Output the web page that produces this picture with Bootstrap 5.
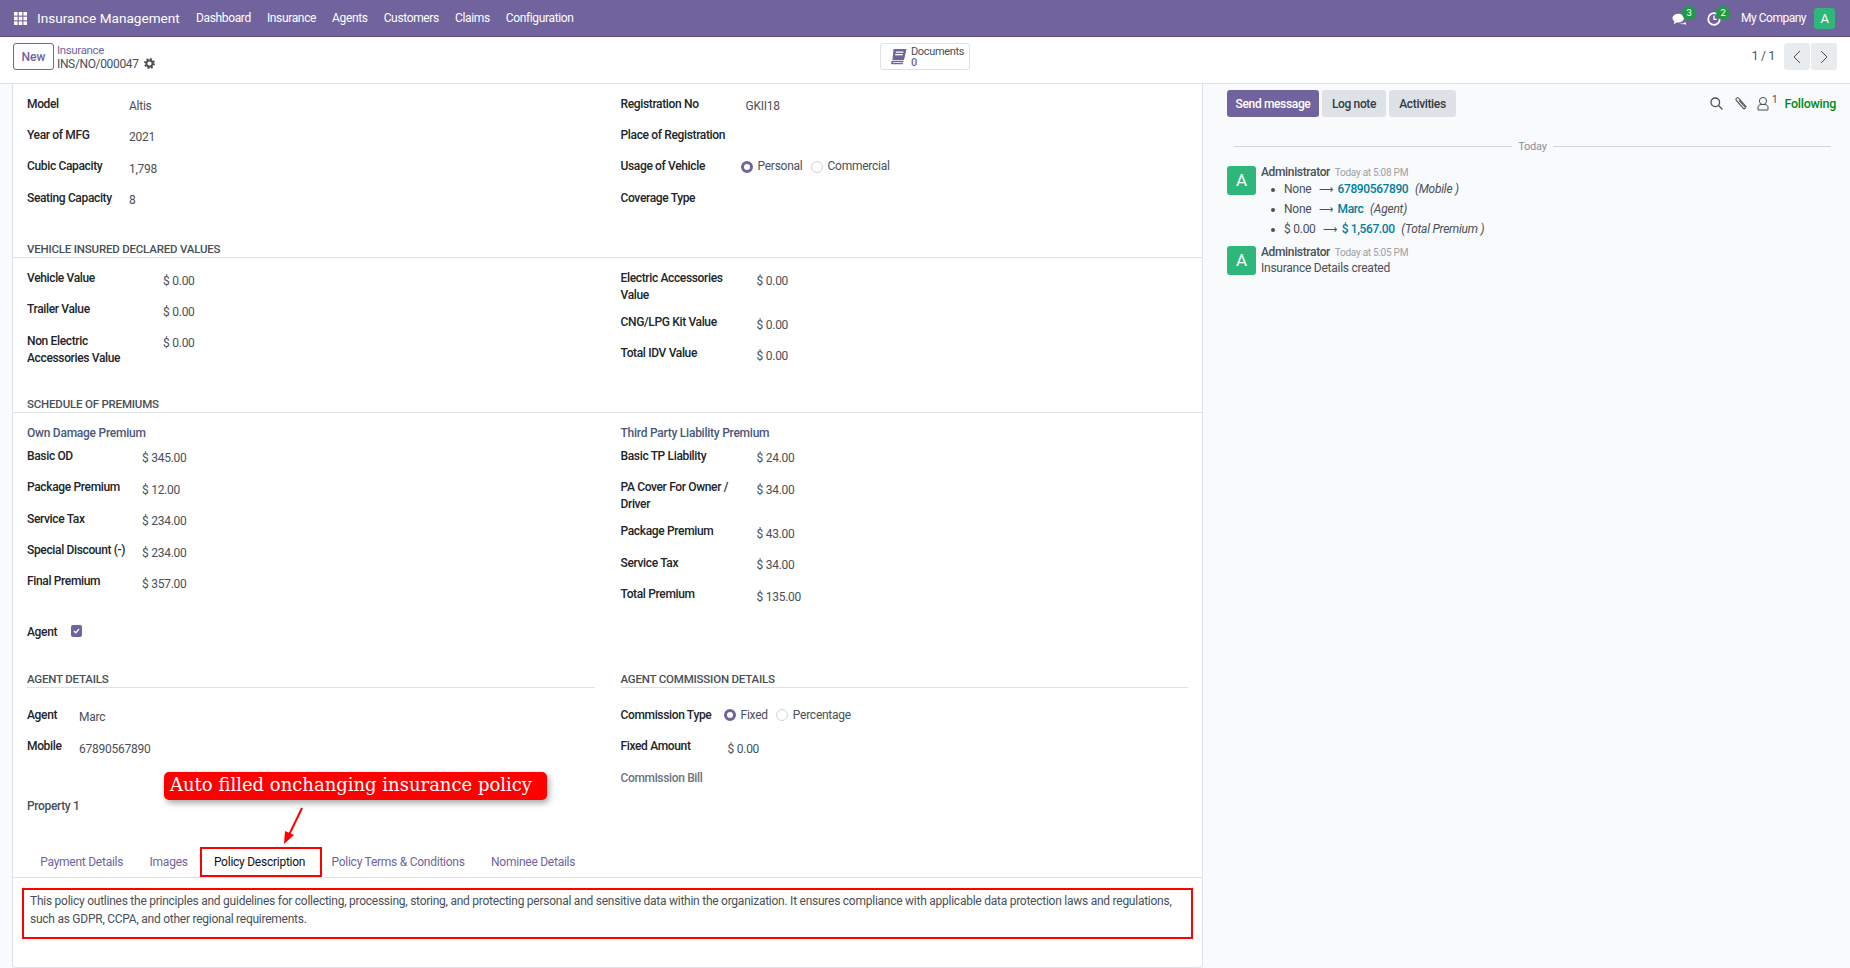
<!DOCTYPE html>
<html lang="en">
<head>
  <meta charset="UTF-8">
  <title>Insurance Management</title>
  <meta name="viewport" content="width=device-width, initial-scale=1">
  <link rel="stylesheet" href="https://cdn.jsdelivr.net/npm/bootstrap@5.3.0/dist/css/bootstrap.min.css">
  <style>
    html, body { height: 100%; }
    body { font-family: "Roboto", "Noto Sans", sans-serif; font-size: 12px; line-height: 17px; letter-spacing: -.25px; color: #495057; overflow: hidden; background: #f9fafb; }

    .topbar { height: 37px; background: #71639e; border-bottom: 1px solid #5b4f85; color: #fff; padding: 0 15px 0 14px; }
    .app-name { font-size: 13.6px; letter-spacing: 0; margin-left: 10px; margin-right: 17px; width: 142px; white-space: nowrap; }
    .menu-item { color: #fff; text-decoration: none; margin-right: 16px; white-space: nowrap; letter-spacing: -.35px; }
    .top-icon { position: relative; width: 16px; height: 16px; display: block; }
    .top-badge { position: absolute; top: -4px; left: 10px; width: 14px; height: 14px; border-radius: 50%; background: #1f9b45; font-size: 9.5px; line-height: 14px; text-align: center; color: #fff; }
    .ico-chat { margin-right: 18px; }
    .ico-clock { margin-right: 19px; }
    .company { letter-spacing: -.5px; }
    .user-chip { width: 21px; height: 21px; background: #2fb67b; border-radius: 3px; font-size: 13px; line-height: 21px; text-align: center; color: #fff; }

    .ctrl { height: 47px; background: #fff; border-bottom: 1px solid #dee2e6; padding: 6px 13px 0 13px; }
    .btn-new { width: 41px; height: 27px; padding: 0; border: 1px solid #71639e; color: #71639e; font-size: 12px; font-weight: 500; border-radius: 3px; }
    .crumb { margin-left: 3px; line-height: 14px; letter-spacing: -.35px; }
    .crumb a { color: #71639e; text-decoration: none; font-size: 11.5px; display: block; line-height: 13px; padding-top: 1px; }
    .crumb svg { vertical-align: -1px; margin-left: 3px; }
    .doc-btn { position: absolute; left: 880px; top: 43px; width: 90px; height: 27px; border: 1px solid #dee2e6; border-radius: 3px; padding-left: 9px; }
    .doc-txt { font-size: 11px; line-height: 11px; color: #495057; margin-left: 4px; letter-spacing: -.35px; }
    .doc-txt b { display: block; color: #71639e; font-weight: 500; }
    .pg-txt { line-height: 27px; }
    .pg-btn { width: 26px; height: 27px; background: #e9ecef; margin-left: 1px; border-radius: 3px; }

    .work { height: 884px; }
    .form-pane { width: 1203px; padding-left: 12px; position: relative; }
    .sheet { background: #fff; border: 1px solid #dee2e6; border-top: 0; border-radius: 0 0 4px 4px; height: 884px; padding: 11.5px 14px 0; }
    .row-tight { --bs-gutter-x: 26px; --bs-gutter-y: 0; }
    .fld { display: flex; align-items: flex-start; height: 31.4px; }
    .fld-tall { height: 44px; }
    .fld-lbl { color: #212529; font-weight: 500; flex: none; letter-spacing: -.35px; }
    .fld-val { padding-top: 2.5px; color: #495057; }
    .w102 .fld-lbl { width: 102px; }
    .w125 .fld-lbl { width: 125px; }
    .w136 .fld-lbl { width: 136px; padding-right: 20px; }
    .w115 .fld-lbl { width: 115px; }
    .w52 .fld-lbl { width: 52px; }
    .w107 .fld-lbl { width: 107px; }
    .fld .lbl-120 { width: 120px; }
    .fld .lbl-103 { width: 103px; }
    .fld .lbl-44 { width: 44px; }
    .fld .lbl-auto { width: auto; color: #495057; }
    .fld .lbl-muted { color: #6c757d; }
    .sec-title { font-weight: 500; font-size: 11.5px; letter-spacing: -.2px; color: #495057; height: 17px; border-bottom: 1px solid #dee2e6; text-transform: uppercase; }
    .sec-full { margin: 20px -14px 0; padding-left: 14px; }
    .sec-second { margin-top: 19px; }
    .sub-head { color: #49597a; font-weight: 500; height: 23px; }
    .opt { display: flex; align-items: center; margin-right: 8px; height: 17px; }
    .opt-dot { width: 12px; height: 12px; border-radius: 50%; border: 1px solid #ced4da; margin-right: 5px; background: #fff; flex: none; }
    .opt-on { border: 3.5px solid #71639e; }
    .chk { width: 11px; height: 12px; background: #71639e; border-radius: 2px; margin-top: -2px; }
    .agent-fld { margin-top: 7px; }
    .agent-row { margin-top: 15.5px; }
    .first-fld { margin-top: 18.5px; }
    .prop-fld { margin-top: 28px; }

    .tab-bar { margin: 18px -14px 0; padding-left: 14px; border-bottom: 1px solid #dee2e6; height: 31px; flex-wrap: nowrap; }
    .tab-bar .nav-link { color: #71639e; padding: 7px 13.2px 6px; border: 0; line-height: 17px; height: 30px; white-space: nowrap; }
    .tab-bar .nav-link.active { color: #111; border: 2px solid #f00; padding: 5px 15px 5px 12px; margin: 0 -4px 0 -1px; border-radius: 0; background: #fff; }
    .policy-box { border: 2px solid #f00; margin: 10px -5px 0 -5px; height: 51px; padding: 3.5px 6px 0 6px; color: #495057; line-height: 17.5px; font-size: 12px; }

    .anno { position: absolute; left: 164px; top: 688px; width: 383px; height: 28px; background: #f00; color: #fff; border-radius: 5px; box-shadow: 2px 3px 6px rgba(0,0,0,.35); font-family: "DejaVu Serif", serif; font-size: 18px; letter-spacing: 0; line-height: 26px; padding-left: 6px; white-space: nowrap; }
    .anno-arrow { position: absolute; left: 276px; top: 722px; }

    .chatter { width: 647px; padding: 6px 14px 0 24px; background: #f9fafb; }
    .ch-btn { height: 27px; padding: 1px 0 0; border: 0; border-radius: 3px; font-size: 12px; font-weight: 500; letter-spacing: -.35px; background: #dee2e6; color: #343a40; margin-right: 3px; }
    .ch-send { width: 92px; background: #71639e; color: #fff; }
    .ch-log { width: 64px; }
    .ch-act { width: 67px; }
    .ico-clip { margin-left: 11px; }
    .ico-user { margin-left: 9px; }
    .ico-count { font-size: 10px; margin-left: 3px; margin-right: 7px; line-height: 10px; align-self: flex-start; }
    .following { color: #008a17; font-weight: 500; font-size: 12.5px; }
    .day-sep { margin: 21px 5px 12px 7px; color: #8a9097; font-size: 11px; height: 16px; }
    .day-sep hr { flex: 1; margin: 0; border-top: 1px solid #ced4da; opacity: 1; }
    .day-sep span { margin: 0 6px; }
    .msg { display: flex; margin-bottom: 8px; height: 72px; }
    .msg-last { height: 30px; }
    .msg-av { width: 29px; height: 29px; background: #2fb67b; color: #fff; border-radius: 3px; text-align: center; line-height: 29px; font-size: 17px; margin-right: 5px; flex: none; }
    .msg-head { line-height: 15px; margin-top: -1px; }
    .msg-who { font-weight: 500; color: #495057; letter-spacing: -.35px; }
    .msg-when { color: #9aa0a6; font-size: 10px; margin-left: 2px; }
    .chg { list-style: none; margin: -1px 0 0; padding: 0 0 0 23px; }
    .chg li { height: 20px; line-height: 20px; white-space: nowrap; position: relative; }
    .chg li::before { content: ""; position: absolute; left: -13px; top: 9px; width: 4px; height: 4px; border-radius: 50%; background: #495057; }
    .chg b { color: #017e9e; font-weight: 500; letter-spacing: -.4px; }
    .chg i { margin-left: 4px; }
    .chg em { font-style: normal; font-size: 9.5px; margin: 0 2px 0 5px; }
  </style>
</head>
<body>
  <nav class="topbar d-flex align-items-center">
    <svg width="13" height="13" viewBox="0 0 13 13" fill="#fff"><rect width="3.6" height="3.6"/><rect x="4.7" width="3.6" height="3.6"/><rect x="9.4" width="3.6" height="3.6"/><rect y="4.7" width="3.6" height="3.6"/><rect x="4.7" y="4.7" width="3.6" height="3.6"/><rect x="9.4" y="4.7" width="3.6" height="3.6"/><rect y="9.4" width="3.6" height="3.6"/><rect x="4.7" y="9.4" width="3.6" height="3.6"/><rect x="9.4" y="9.4" width="3.6" height="3.6"/></svg>
    <span class="app-name">Insurance Management</span>
    <a class="menu-item" href="#">Dashboard</a>
    <a class="menu-item" href="#">Insurance</a>
    <a class="menu-item" href="#">Agents</a>
    <a class="menu-item" href="#">Customers</a>
    <a class="menu-item" href="#">Claims</a>
    <a class="menu-item" href="#">Configuration</a>
    <div class="ms-auto d-flex align-items-center">
      <span class="top-icon ico-chat">
        <svg width="16" height="16" viewBox="0 0 18 18" fill="#fff"><ellipse cx="7" cy="8" rx="6.500" ry="5"/><path d="M3 11l-1 4 4-2.500zM9 14c3 .6 5-.5 6-2l1 3.500-3-1c-1 .5-3 .5-4-.5z"/></svg>
        <span class="top-badge">3</span>
      </span>
      <span class="top-icon ico-clock">
        <svg width="16" height="16" viewBox="0 0 18 18" fill="none" stroke="#fff" stroke-width="2"><circle cx="9" cy="9" r="6.500"/><path d="M9 5v4.500h3" stroke-width="1.500"/></svg>
        <span class="top-badge">2</span>
      </span>
      <span class="me-2 company">My Company</span>
      <span class="user-chip">A</span>
    </div>
  </nav>

  <div class="ctrl d-flex align-items-start">
    <button class="btn btn-new">New</button>
    <div class="crumb">
      <a href="#">Insurance</a>
      <span>INS/NO/000047</span>
      <svg width="11" height="11" viewBox="0 0 12 12"><circle cx="6" cy="6" r="3.4" fill="none" stroke="#495057" stroke-width="2.2"/><circle cx="6" cy="6" r="5" fill="none" stroke="#495057" stroke-width="2" stroke-dasharray="2 1.93"/></svg>
    </div>
    <div class="doc-btn d-flex align-items-center">
      <svg width="17" height="16" viewBox="0 0 17 16" fill="#71639e"><path d="M3.500 0H16.500L14 11H2.500zM1.500 12.200L2 11.800H13.600L13.300 13H3.400c-.6 0-.6.8 0 .8h9.700l-.3 1.500H2.300c-1.100 0-1.400-.9-.8-3.100z"/><rect x="5.800" y="2.500" width="7.500" height="1.300" fill="#fff"/><rect x="5.200" y="5" width="7.500" height="1.300" fill="#fff"/></svg>
      <div class="doc-txt">Documents<b>0</b></div>
    </div>
    <div class="ms-auto d-flex align-items-start">
      <span class="me-2 pg-txt">1 / 1</span>
      <span class="pg-btn d-flex align-items-center justify-content-center"><svg width="8" height="14" viewBox="0 0 8 14" fill="none" stroke="#495057"><path d="M7 1L1 7l6 6"/></svg></span>
      <span class="pg-btn d-flex align-items-center justify-content-center"><svg width="8" height="14" viewBox="0 0 8 14" fill="none" stroke="#495057"><path d="M1 1l6 6-6 6"/></svg></span>
    </div>
  </div>

  <div class="work d-flex">
    <div class="form-pane">
      <div class="sheet">
        <div class="row row-tight">
          <div class="col-6 w102">
            <div class="fld"><span class="fld-lbl">Model</span><span class="fld-val">Altis</span></div>
            <div class="fld"><span class="fld-lbl">Year of MFG</span><span class="fld-val">2021</span></div>
            <div class="fld"><span class="fld-lbl">Cubic Capacity</span><span class="fld-val">1,798</span></div>
            <div class="fld"><span class="fld-lbl">Seating Capacity</span><span class="fld-val">8</span></div>
          </div>
          <div class="col-6 w125">
            <div class="fld"><span class="fld-lbl">Registration No</span><span class="fld-val">GKII18</span></div>
            <div class="fld"><span class="fld-lbl">Place of Registration</span></div>
            <div class="fld"><span class="fld-lbl lbl-120">Usage of Vehicle</span><span class="opt"><span class="opt-dot opt-on"></span>Personal</span><span class="opt"><span class="opt-dot"></span>Commercial</span></div>
            <div class="fld"><span class="fld-lbl">Coverage Type</span></div>
          </div>
        </div>

        <div class="sec-title sec-full">Vehicle Insured Declared Values</div>
        <div class="row row-tight mt-2">
          <div class="col-6 w136 pt-1">
            <div class="fld"><span class="fld-lbl">Vehicle Value</span><span class="fld-val">$ 0.00</span></div>
            <div class="fld"><span class="fld-lbl">Trailer Value</span><span class="fld-val">$ 0.00</span></div>
            <div class="fld fld-tall"><span class="fld-lbl">Non Electric Accessories Value</span><span class="fld-val">$ 0.00</span></div>
          </div>
          <div class="col-6 w136 pt-1">
            <div class="fld fld-tall"><span class="fld-lbl">Electric Accessories Value</span><span class="fld-val">$ 0.00</span></div>
            <div class="fld"><span class="fld-lbl">CNG/LPG Kit Value</span><span class="fld-val">$ 0.00</span></div>
            <div class="fld"><span class="fld-lbl">Total IDV Value</span><span class="fld-val">$ 0.00</span></div>
          </div>
        </div>

        <div class="sec-title sec-full sec-second">Schedule of Premiums</div>
        <div class="row row-tight mt-2 pt-1">
          <div class="col-6 w115">
            <div class="sub-head">Own Damage Premium</div>
            <div class="fld"><span class="fld-lbl">Basic OD</span><span class="fld-val">$ 345.00</span></div>
            <div class="fld"><span class="fld-lbl">Package Premium</span><span class="fld-val">$ 12.00</span></div>
            <div class="fld"><span class="fld-lbl">Service Tax</span><span class="fld-val">$ 234.00</span></div>
            <div class="fld"><span class="fld-lbl">Special Discount (-)</span><span class="fld-val">$ 234.00</span></div>
            <div class="fld"><span class="fld-lbl">Final Premium</span><span class="fld-val">$ 357.00</span></div>
          </div>
          <div class="col-6 w136">
            <div class="sub-head">Third Party Liability Premium</div>
            <div class="fld"><span class="fld-lbl">Basic TP Liability</span><span class="fld-val">$ 24.00</span></div>
            <div class="fld fld-tall"><span class="fld-lbl">PA Cover For Owner / Driver</span><span class="fld-val">$ 34.00</span></div>
            <div class="fld"><span class="fld-lbl">Package Premium</span><span class="fld-val">$ 43.00</span></div>
            <div class="fld"><span class="fld-lbl">Service Tax</span><span class="fld-val">$ 34.00</span></div>
            <div class="fld"><span class="fld-lbl">Total Premium</span><span class="fld-val">$ 135.00</span></div>
          </div>
        </div>

        <div class="fld agent-fld"><span class="fld-lbl lbl-44">Agent</span><span class="fld-val"><span class="chk d-flex align-items-center justify-content-center"><svg width="7" height="6" viewBox="0 0 7 6" fill="none" stroke="#fff" stroke-width="1.3"><path d="M1 3l1.8 1.8L6 1"/></svg></span></span></div>

        <div class="row row-tight agent-row">
          <div class="col-6 w52">
            <div class="sec-title">Agent Details</div>
            <div class="fld first-fld"><span class="fld-lbl">Agent</span><span class="fld-val">Marc</span></div>
            <div class="fld"><span class="fld-lbl">Mobile</span><span class="fld-val">67890567890</span></div>
            <div class="fld prop-fld"><span class="fld-lbl lbl-auto">Property 1</span></div>
          </div>
          <div class="col-6 w107">
            <div class="sec-title">Agent Commission Details</div>
            <div class="fld first-fld"><span class="fld-lbl lbl-103">Commission Type</span><span class="opt"><span class="opt-dot opt-on"></span>Fixed</span><span class="opt"><span class="opt-dot"></span>Percentage</span></div>
            <div class="fld"><span class="fld-lbl">Fixed Amount</span><span class="fld-val">$ 0.00</span></div>
            <div class="fld"><span class="fld-lbl lbl-muted">Commission Bill</span></div>
          </div>
        </div>

        <ul class="nav tab-bar">
          <li class="nav-item"><a class="nav-link" href="#">Payment Details</a></li>
          <li class="nav-item"><a class="nav-link" href="#">Images</a></li>
          <li class="nav-item"><a class="nav-link active" href="#">Policy Description</a></li>
          <li class="nav-item"><a class="nav-link" href="#">Policy Terms &amp; Conditions</a></li>
          <li class="nav-item"><a class="nav-link" href="#">Nominee Details</a></li>
        </ul>
        <div class="policy-box">This policy outlines the principles and guidelines for collecting, processing, storing, and protecting personal and sensitive data within the organization. It ensures compliance with applicable data protection laws and regulations, such as GDPR, CCPA, and other regional requirements.</div>
      </div>
      <div class="anno">Auto filled onchanging insurance policy</div>
      <svg class="anno-arrow" width="30" height="40" viewBox="0 0 30 40"><path d="M26 2L13 29" stroke="#f00" stroke-width="2" fill="none"/><path d="M8 38l1-13 9 4z" fill="#f00"/></svg>
    </div>

    <aside class="chatter">
      <div class="d-flex align-items-center">
        <button class="ch-btn ch-send">Send message</button>
        <button class="ch-btn ch-log">Log note</button>
        <button class="ch-btn ch-act">Activities</button>
        <div class="ms-auto d-flex align-items-center">
          <svg width="13" height="13" viewBox="0 0 13 13" fill="none" stroke="#495057" stroke-width="1.3"><circle cx="5.3" cy="5.3" r="4.3"/><path d="M8.500 8.500L12.500 12.500"/></svg>
          <svg class="ico-clip" width="14" height="15" viewBox="0 0 14 15" fill="none" stroke="#495057" stroke-width="1.1"><path d="M12.500 11L5 2.500C3.500 .8 1 2.500 2.300 4.300l7 8c1 1.200 2.700 0 1.700-1.300L5 4.300"/></svg>
          <svg class="ico-user" width="12" height="15" viewBox="0 0 12 15" fill="none" stroke="#495057" stroke-width="1"><circle cx="6" cy="5" r="3.600"/><path d="M1 14v-3c0-1.500 1.500-2.200 3-2.500h4c1.500.3 3 1 3 2.500v3z"/></svg>
          <span class="ico-count">1</span>
          <span class="following">Following</span>
        </div>
      </div>
      <div class="day-sep d-flex align-items-center"><hr><span>Today</span><hr></div>
      <div class="msg">
        <div class="msg-av">A</div>
        <div>
          <div class="msg-head"><span class="msg-who">Administrator</span> <span class="msg-when">Today at 5:08 PM</span></div>
          <ul class="chg">
            <li>None <em>⟶</em> <b>67890567890</b> <i>(Mobile )</i></li>
            <li>None <em>⟶</em> <b>Marc</b> <i>(Agent)</i></li>
            <li>$ 0.00 <em>⟶</em> <b>$ 1,567.00</b> <i>(Total Premium )</i></li>
          </ul>
        </div>
      </div>
      <div class="msg msg-last">
        <div class="msg-av">A</div>
        <div>
          <div class="msg-head"><span class="msg-who">Administrator</span> <span class="msg-when">Today at 5:05 PM</span></div>
          <div>Insurance Details created</div>
        </div>
      </div>
    </aside>
  </div>

  <script src="https://cdn.jsdelivr.net/npm/bootstrap@5.3.0/dist/js/bootstrap.bundle.min.js"></script>
</body>
</html>
